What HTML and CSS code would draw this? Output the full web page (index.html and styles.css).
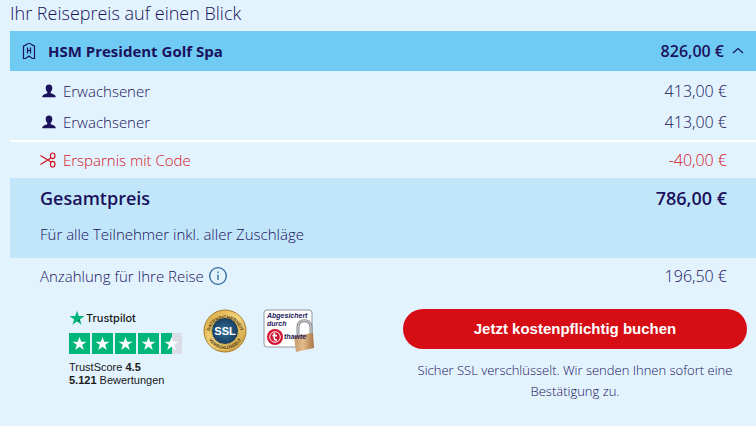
FILE: index.html
```html
<!DOCTYPE html>
<html lang="de">
<head>
<meta charset="utf-8">
<title>Ihr Reisepreis</title>
<link rel="stylesheet" href="styles.css">
</head>
<body>
<svg class="defs" width="0" height="0" aria-hidden="true">
  <symbol id="person" viewBox="0 0 14 14"><path d="M7 0.5C9.3 0.5 10.4 2 10.3 4.3C10.2 6.2 9.500 7.200 8.700 8V9.200C10.500 10 13.600 10.300 13.800 13.300H0.200C0.400 10.300 3.500 10 5.300 9.200V8C4.500 7.200 3.800 6.200 3.700 4.300C3.600 2 4.700 0.500 7 0.500Z" fill="#1b115c"/></symbol>
  <symbol id="star" viewBox="0 0 24 24"><path d="M12 1L14.700 9.100H23.200L16.300 14.100L18.900 22.200L12 17.200L5.100 22.200L7.700 14.100L0.800 9.100H9.300Z"/></symbol>
</svg>
<main class="summary">
  <h1 class="title">Ihr Reisepreis auf einen Blick</h1>
  <section class="prices">
    <div class="hotel">
      <svg class="hotel-icon" width="14" height="18" viewBox="0 0 14 18" aria-hidden="true" fill="none" stroke="#1b115c"><path d="M1.500 4C3.800 3.700 4.600 1.500 7 1.500S10.200 3.700 12.500 4V16.500H10.300L7 14L3.700 16.500H1.500Z" stroke-width="1.200"/><path d="M5.500 5.500V11.500M8.500 5.500V11.500M5.500 8.500H8.500" stroke-width="1.200"/></svg>
      <h2 class="hotel-name">HSM President Golf Spa</h2>
      <span class="hotel-price">826,00 €</span>
      <button class="toggle" type="button" aria-label="Details ausblenden"><svg width="12" height="8" viewBox="0 0 12 8" fill="none" stroke="#1b115c" stroke-width="1.200"><path d="M1 6L6 1.500L11 6"/></svg></button>
    </div>
    <div class="travellers">
      <div class="row"><span class="label"><svg class="icon person" width="14" height="14" viewBox="0 0 14 14"><use href="#person"/></svg>Erwachsener</span><span>413,00 €</span></div>
      <div class="row"><span class="label"><svg class="icon person" width="14" height="14" viewBox="0 0 14 14"><use href="#person"/></svg>Erwachsener</span><span>413,00 €</span></div>
    </div>
    <div class="row tall saving"><span class="label"><svg class="icon" width="16" height="16" viewBox="0 0 16 16" fill="none" stroke="#d4121e" stroke-width="1.200"><path d="M0.500 3.500L11 10M0.500 12.500L11 6"/><ellipse cx="12.700" cy="3.800" rx="2.300" ry="2.800"/><ellipse cx="12.700" cy="12.200" rx="2.300" ry="2.800"/></svg>Ersparnis mit Code</span><span>-40,00 €</span></div>
    <div class="total">
      <div class="row total-row"><strong>Gesamtpreis</strong><strong>786,00 €</strong></div>
      <p class="note">Für alle Teilnehmer inkl. aller Zuschläge</p>
    </div>
    <div class="row tall"><span class="label">Anzahlung für Ihre Reise<button class="info" type="button" aria-label="Information"><svg width="18" height="18" viewBox="0 0 18 18"><circle cx="9" cy="9" r="8.300" fill="none" stroke="#2b659b" stroke-width="1.300"/><path d="M9 7.500V13M9 4.500V6" stroke="#2b659b" stroke-width="1.300"/></svg></button></span><span>196,50 €</span></div>
  </section>
  <footer class="bottom">
    <div class="trust">
      <div class="brand"><svg width="16" height="16" viewBox="0 0 24 24" fill="#00b67a"><use href="#star"/><path d="M12 17.200L16.900 15.900L16.300 14.100Z" fill="#005128"/></svg>Trustpilot</div>
      <div class="stars" role="img" aria-label="4,5 von 5 Sternen">
        <span class="tile"><svg viewBox="0 0 24 24"><use href="#star"/></svg></span>
        <span class="tile"><svg viewBox="0 0 24 24"><use href="#star"/></svg></span>
        <span class="tile"><svg viewBox="0 0 24 24"><use href="#star"/></svg></span>
        <span class="tile"><svg viewBox="0 0 24 24"><use href="#star"/></svg></span>
        <span class="tile half"><svg viewBox="0 0 24 24"><use href="#star"/></svg></span>
      </div>
      <p class="score">TrustScore <b>4.5</b><br><b>5.121</b> Bewertungen</p>
    </div>
    <svg class="ssl" width="44" height="44" viewBox="0 0 88 88" role="img" aria-label="SSL Datensicherheit verschlüsselt">
      <defs>
        <linearGradient id="gold" x1="0" y1="0" x2="1" y2="1"><stop offset="0" stop-color="#d3a13d"/><stop offset=".5" stop-color="#f5d67a"/><stop offset="1" stop-color="#c08d30"/></linearGradient>
        <radialGradient id="blue"><stop offset="0" stop-color="#34759f"/><stop offset="1" stop-color="#173b5c"/></radialGradient>
        <path id="arc-top" d="M13 50A31 31 0 1 1 75 50"/>
        <path id="arc-bottom" d="M6 42A38 38 0 0 0 82 42"/>
      </defs>
      <circle cx="44" cy="44" r="42" fill="url(#gold)" stroke="#a87c2c" stroke-width="2"/>
      <circle cx="44" cy="44" r="27" fill="url(#blue)" stroke="#d8b557" stroke-width="2"/>
      <g class="ring-text"><text><textPath href="#arc-top" startOffset="50%">DATENSICHERHEIT</textPath></text><text><textPath href="#arc-bottom" startOffset="50%">VERSCHLÜSSELT</textPath></text></g>
      <text class="ssl-text" x="44" y="52">SSL</text>
    </svg>
    <svg class="thawte" width="52" height="44" viewBox="0 0 52 44" role="img" aria-label="Abgesichert durch thawte">
      <defs><linearGradient id="brass"><stop offset="0" stop-color="#c49a68"/><stop offset=".45" stop-color="#e3bd8c"/><stop offset="1" stop-color="#a87545"/></linearGradient></defs>
      <rect x="1" y="1" width="48" height="37" rx="3" fill="#fff" stroke="#93969f"/>
      <circle cx="12" cy="28" r="8" fill="#d3122f"/><circle cx="12" cy="28" r="5.300" fill="none" stroke="#fff"/><path d="M11.300 24V29.500Q11.300 31.300 14 30.800M9.400 26.700H14" fill="none" stroke="#fff" stroke-width="1.700"/>
      <path d="M35 27V18C35 9.500 47.500 9.500 48 18V25" fill="none" stroke="#85878a" stroke-width="3"/>
      <path d="M35 27V18C35 9.500 47.500 9.500 48 18V25" fill="none" stroke="#d0d2d4" stroke-width="1.200"/>
      <path d="M31 27L50 24L51 39L33 43Z" fill="url(#brass)"/>
      <g class="thawte-text"><text x="4" y="9">Abgesichert</text><text x="4" y="17">durch</text><text x="21" y="30">thawte</text></g>
    </svg>
    <div class="checkout">
      <button class="book" type="button">Jetzt kostenpflichtig buchen</button>
      <p class="secure">Sicher SSL verschlüsselt. Wir senden Ihnen sofort eine Bestätigung zu.</p>
    </div>
  </footer>
</main>
</body>
</html>
```
FILE: styles.css
```css
* { box-sizing: border-box; }
body {
  margin: 0;
  background: #e2f3fe;
  color: #1b115c;
  font: 350 16px/24px "Open Sans", "Noto Sans", sans-serif;
}
h1, h2, p { margin: 0; }
button { font: inherit; color: inherit; border: 0; padding: 0; background: none; cursor: pointer; }
svg { display: block; flex: none; }
.defs { position: absolute; }
.summary { padding-left: 10px; }
.title { font-size: 18px; font-weight: 350; line-height: 27px; padding-bottom: 4px; }
.hotel { display: flex; align-items: center; height: 40px; padding: 0 12px; background: #70cbf4; font-weight: 600; }
.hotel-name { font-size: 15px; font-weight: 700; margin-left: 12px; flex: 1; }
.hotel-price { font-size: 16px; }
.toggle { margin-left: 8px; }
.travellers { padding: 4px 0 3px; border-bottom: 2px solid #fff; }
.row { display: flex; align-items: center; justify-content: space-between; min-height: 31px; padding: 0 29px 0 30px; }
.label { display: flex; align-items: center; font-size: 15px; }
.icon { margin-right: 7px; }
.person { margin-left: 2px; }
.tall { min-height: 36px; }
.saving { color: #d4121e; }
.total { height: 80px; background: #c1e6fa; }
.total-row { min-height: 40px; font-size: 18px; }
.total strong { font-weight: 600; }
.note { padding: 4px 30px; font-size: 15px; }
.info { margin-left: 5px; }
.bottom { display: flex; align-items: flex-start; padding: 15px 9px 16px 59px; }
.trust { width: 113px; margin-right: 21px; color: #191919; font-family: "Liberation Sans", sans-serif; font-weight: 400; }
.brand { display: flex; align-items: center; gap: 1px; height: 18px; font: 500 11px/18px Inter, sans-serif; }
.stars { display: flex; gap: 2px; margin: 6px 0 7px; }
.tile { display: grid; place-items: center; width: 21px; height: 21px; background: #00b67a; }
.tile svg { width: 15px; height: 15px; fill: #fff; }
.half { background: linear-gradient(90deg, #00b67a 50%, #dcdce6 50%); }
.score { font-size: 11px; line-height: 13px; white-space: nowrap; }
.ssl { margin-right: 16px; }
.ring-text { font: bold 9px "Liberation Sans", sans-serif; fill: #4b3815; text-anchor: middle; }
.ssl-text { font: bold 22px "Liberation Sans", sans-serif; fill: #fff; text-anchor: middle; }
.thawte-text { font: italic bold 7px "Liberation Sans", sans-serif; fill: #242059; }
.checkout { flex: 0 1 344px; margin-left: auto; text-align: center; }
.book { display: block; width: 100%; height: 40px; border-radius: 20px; background: #d60d15; color: #fff; font: bold 15px/20px "Liberation Sans", sans-serif; }
.secure { margin-top: 11px; padding: 0 12px; font-size: 13px; line-height: 21px; }
```
